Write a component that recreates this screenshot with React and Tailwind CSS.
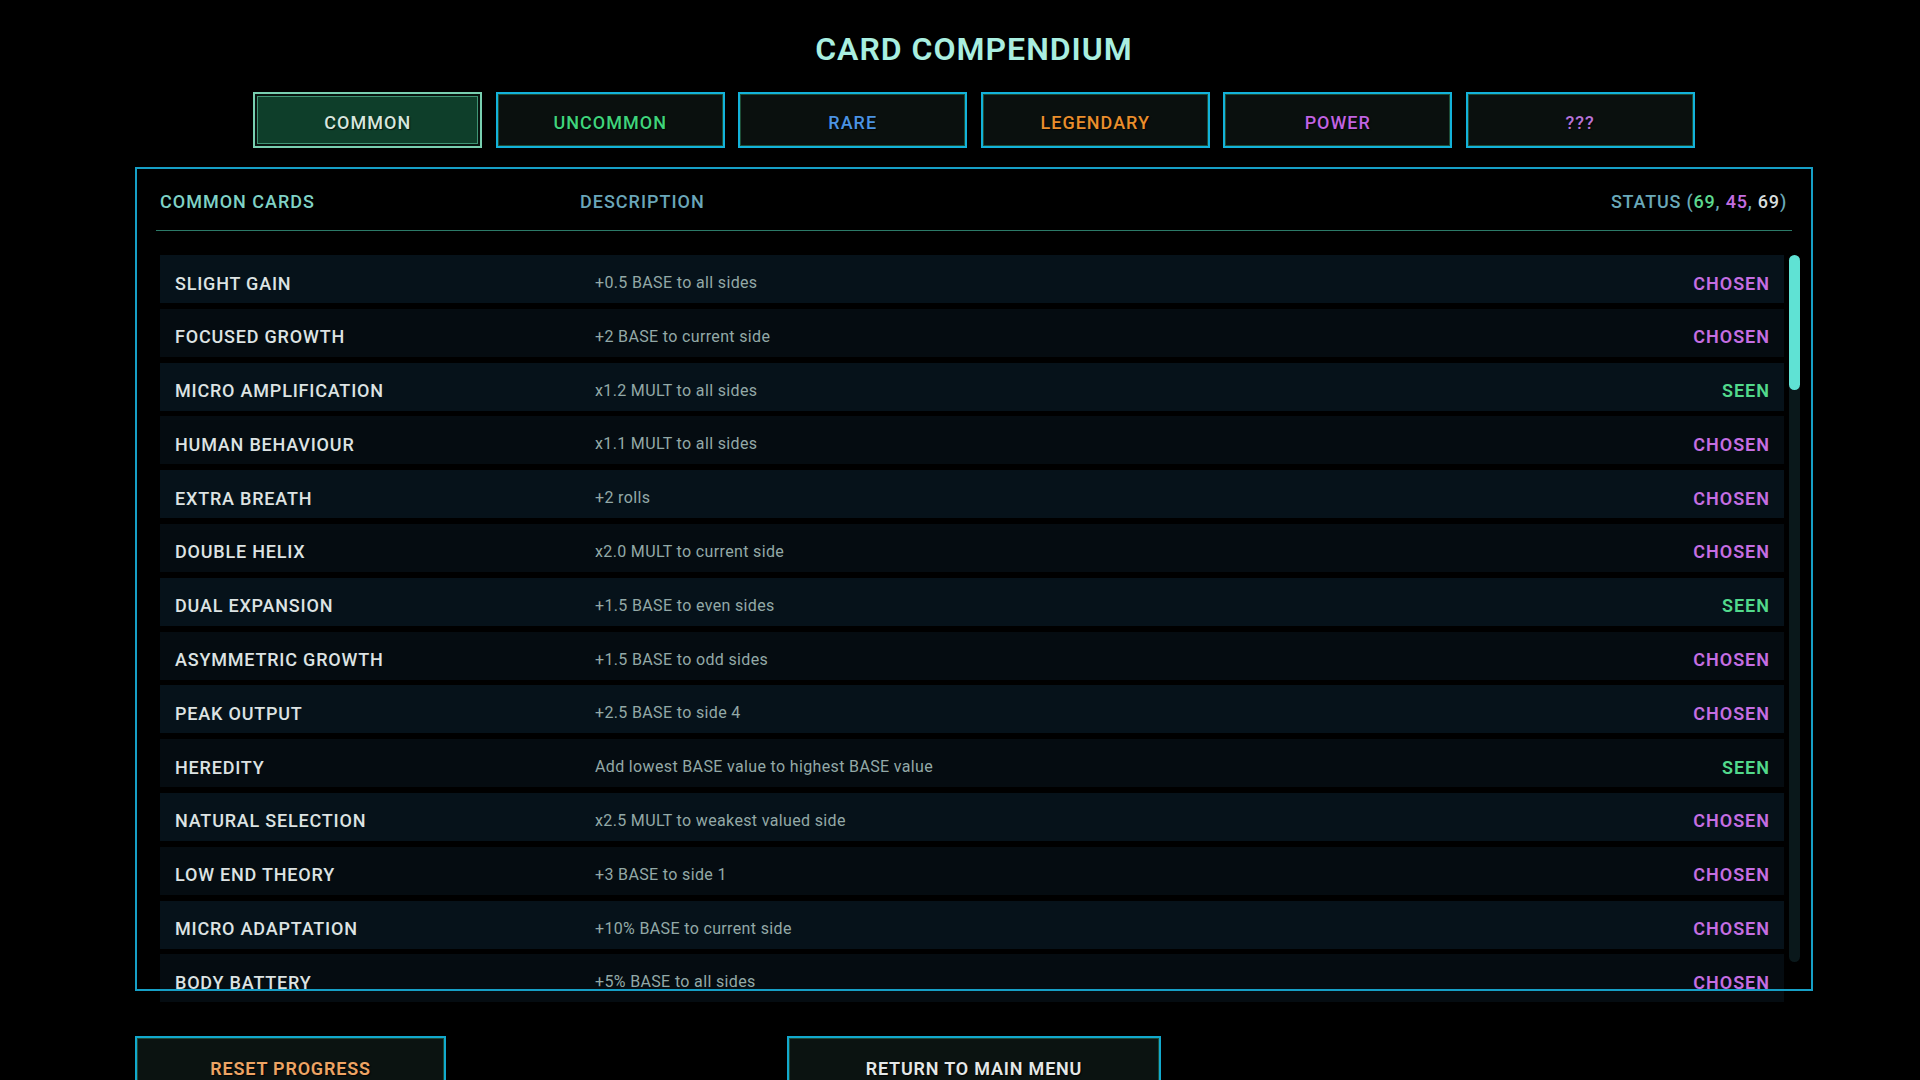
import React from "react";

const FONT = { fontFamily: "Roboto, 'Liberation Sans', sans-serif" };

const tabs = [
  { label: "COMMON", color: "text-[#d6e6de]", active: true },
  { label: "UNCOMMON", color: "text-[#3fd47c]" },
  { label: "RARE", color: "text-[#4b93e3]" },
  { label: "LEGENDARY", color: "text-[#ea8e2c]" },
  { label: "POWER", color: "text-[#c163e2]" },
  { label: "???", color: "text-[#b673d8]" },
];

const rows = [
  ["SLIGHT GAIN", "+0.5 BASE to all sides", "CHOSEN"],
  ["FOCUSED GROWTH", "+2 BASE to current side", "CHOSEN"],
  ["MICRO AMPLIFICATION", "x1.2 MULT to all sides", "SEEN"],
  ["HUMAN BEHAVIOUR", "x1.1 MULT to all sides", "CHOSEN"],
  ["EXTRA BREATH", "+2 rolls", "CHOSEN"],
  ["DOUBLE HELIX", "x2.0 MULT to current side", "CHOSEN"],
  ["DUAL EXPANSION", "+1.5 BASE to even sides", "SEEN"],
  ["ASYMMETRIC GROWTH", "+1.5 BASE to odd sides", "CHOSEN"],
  ["PEAK OUTPUT", "+2.5 BASE to side 4", "CHOSEN"],
  ["HEREDITY", "Add lowest BASE value to highest BASE value", "SEEN"],
  ["NATURAL SELECTION", "x2.5 MULT to weakest valued side", "CHOSEN"],
  ["LOW END THEORY", "+3 BASE to side 1", "CHOSEN"],
  ["MICRO ADAPTATION", "+10% BASE to current side", "CHOSEN"],
  ["BODY BATTERY", "+5% BASE to all sides", "CHOSEN"],
];

function Tab({ label, color, active }) {
  if (active) {
    return (
      <div className="w-[229px] h-[56px] border-2 border-[#78cfb0] p-[2px] bg-[#07140f]">
        <div className="w-full h-full pt-[4px] border border-[#3f9474] bg-[#0e3e2a] flex items-center justify-center">
          <span className={`text-[18px] font-medium tracking-[1px] ${color} [text-shadow:1px_1px_1px_rgba(0,0,0,0.7)]`}>{label}</span>
        </div>
      </div>
    );
  }
  return (
    <div className="w-[229px] h-[56px] border-2 border-[#13b2da] bg-[#0a100e]">
      <div className="w-full h-full pt-[4px] border border-[#1d4d36] flex items-center justify-center">
        <span className={`text-[18px] font-medium tracking-[1px] ${color} [text-shadow:1px_1px_1px_rgba(0,0,0,0.7)]`}>{label}</span>
      </div>
    </div>
  );
}

function BottomButton({ label, color, width }) {
  return (
    <div className={`${width} h-[64px] border-2 border-[#12a9cd] bg-[#0b1311]`}>
      <div className="w-full h-full border border-[#1d4a36] flex items-center justify-center">
        <span className={`text-[18px] font-semibold tracking-[0.8px] ${color} [text-shadow:1px_1px_1px_rgba(0,0,0,0.8)]`}>{label}</span>
      </div>
    </div>
  );
}

export default function App() {
  return (
    <div className="w-[1920px] h-[1080px] overflow-hidden bg-black" style={FONT}>
      <div className="ml-[135px] w-[1678px] flex flex-col">
        <h1 className="pt-[29px] leading-[40px] text-center text-[32px] font-semibold tracking-[1px] text-[#a9efe0]">
          CARD COMPENDIUM
        </h1>

        <div className="mt-[23px] flex justify-center gap-[13.5px]">
          {tabs.map((t) => (
            <Tab key={t.label} {...t} />
          ))}
        </div>

        <div className="relative mt-[19px] h-[824px] px-[21px]">
          <div className="absolute inset-0 border-2 border-[#169fc6] pointer-events-none z-10"></div>

          <div className="pt-[23px] pb-[16px] pl-[4px] pr-[5px] grid grid-cols-[420px_1fr_auto] items-center leading-[24px] text-[18px] font-medium tracking-[1px]">
            <span className="text-[#7fd2c6]">COMMON CARDS</span>
            <span className="text-[#6aa6b9]">DESCRIPTION</span>
            <span className="text-[#6aa9b9] tracking-[0.8px]">
              STATUS (<span className="text-[#5cd88e]">69</span>, <span className="text-[#c46ee2]">45</span>, <span className="text-[#d7dddd]">69</span>)
            </span>
          </div>
          <div className="h-px bg-[#2c7a68]"></div>

          <div className="mt-[24px] ml-[4px] mr-[-8px] h-[749px] overflow-hidden flex gap-[5px]">
            <div className="flex-1 flex flex-col gap-[5.8px]">
              {rows.map(([name, desc, status], i) => (
                <div
                  key={name}
                  className={`shrink-0 h-[48px] pl-[15px] pr-[14px] pt-[8px] grid grid-cols-[420px_1fr_auto] items-center ${
                    i % 2 === 0 ? "bg-[#06121a]" : "bg-[#050c11]"
                  }`}
                >
                  <span className="text-[18px] font-medium tracking-[0.8px] text-[#dde3e3]">{name}</span>
                  <span className="text-[16px] tracking-[0.35px] text-[#93a9a7]">{desc}</span>
                  <span
                    className={`text-[18px] font-semibold tracking-[1px] ${
                      status === "SEEN" ? "text-[#52d98c]" : "text-[#c56ee2]"
                    }`}
                  >
                    {status}
                  </span>
                </div>
              ))}
            </div>
            <div className="w-[11px] shrink-0 self-start h-[707px] rounded-full bg-[#0a181b] flex flex-col">
              <div className="h-[135px] rounded-full bg-[#5fe2d4]"></div>
            </div>
          </div>
        </div>

        <div className="mt-[45px] grid grid-cols-3">
          <div className="flex justify-start">
            <BottomButton label="RESET PROGRESS" color="text-[#eda464]" width="w-[311px]" />
          </div>
          <div className="flex justify-center">
            <BottomButton label="RETURN TO MAIN MENU" color="text-[#e4e8e8]" width="w-[374px]" />
          </div>
          <div></div>
        </div>
      </div>
    </div>
  );
}
